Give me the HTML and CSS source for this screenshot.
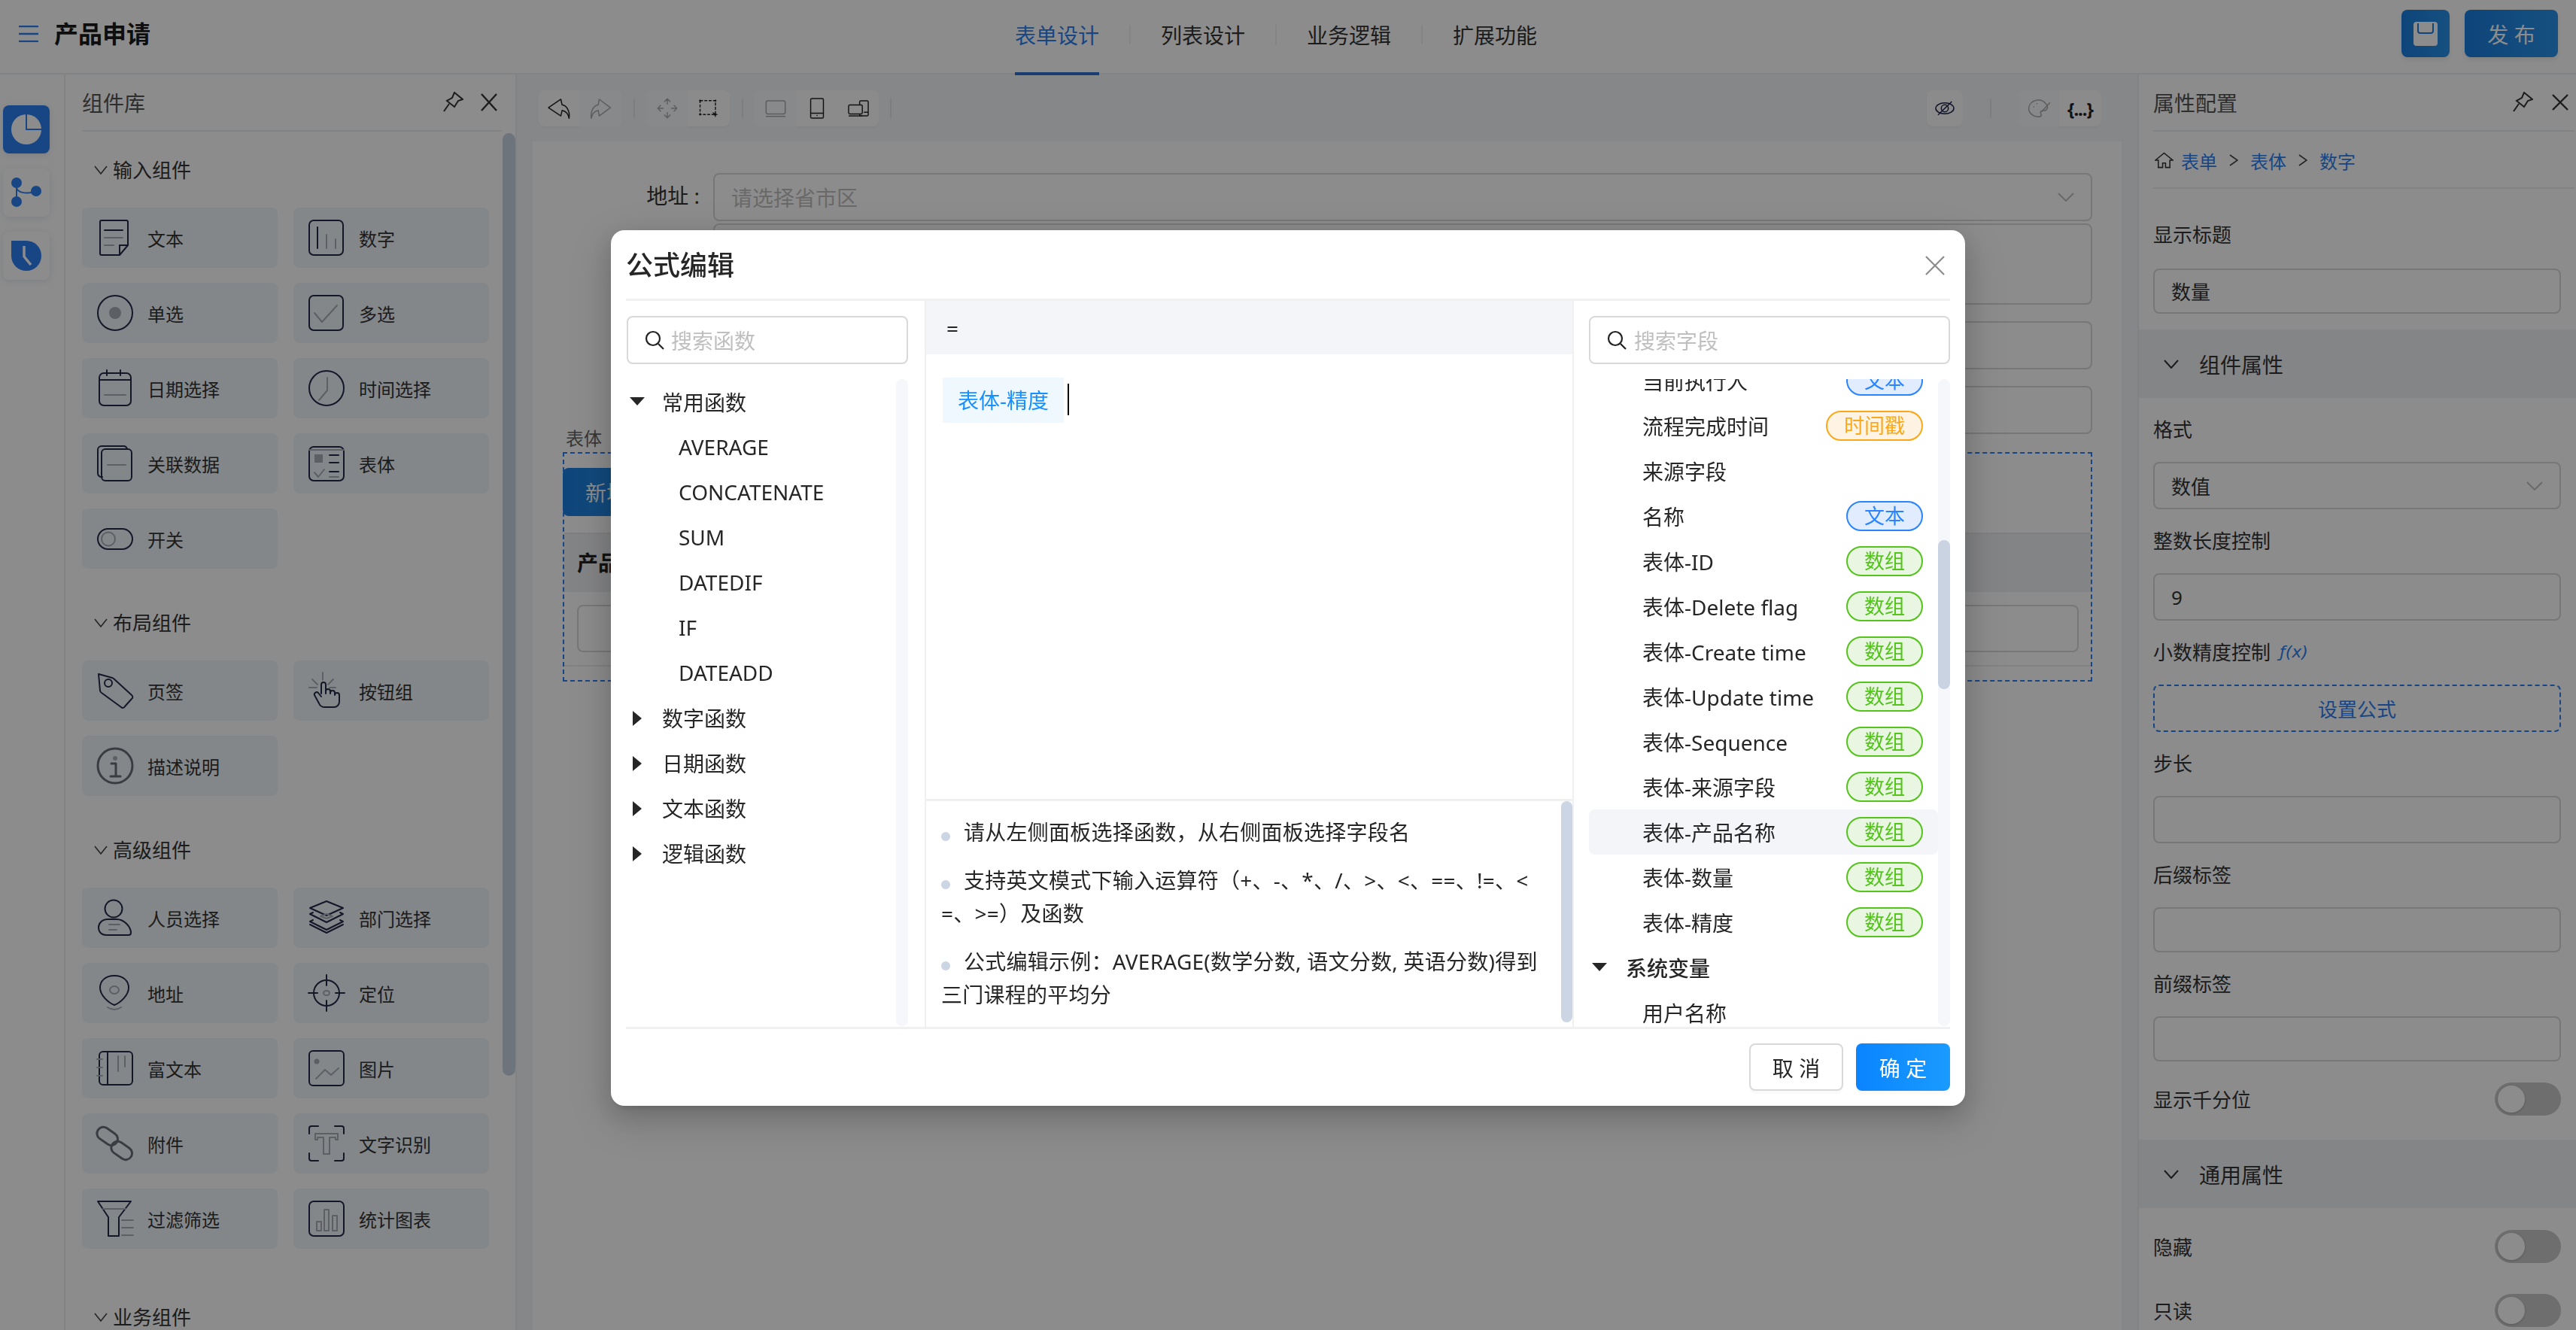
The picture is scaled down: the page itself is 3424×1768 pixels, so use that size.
FILE: index.html
```html
<!DOCTYPE html>
<html lang="zh">
<head>
<meta charset="utf-8">
<title>产品申请</title>
<link rel="stylesheet" href="styles.css">
</head>
<body>
<div class="app">
  <header class="topbar">
    <div class="brand">
      <svg class="menu-icon" viewBox="0 0 26 22"><path d="M0 1h26M0 11h26M0 21h26"/></svg>
      <span class="brand-name">产品申请</span>
    </div>
    <nav class="tabs">
      <a class="tab active">表单设计</a><i class="tab-sep"></i>
      <a class="tab">列表设计</a><i class="tab-sep"></i>
      <a class="tab">业务逻辑</a><i class="tab-sep"></i>
      <a class="tab">扩展功能</a>
    </nav>
    <div class="actions">
      <button class="primary-btn save-btn"><svg viewBox="0 0 32 32" class="save-icon"><rect width="32" height="32" rx="4" fill="#fff"/><path d="M6 2v10a3 3 0 0 0 3 3h14a3 3 0 0 0 3-3V2" fill="none" stroke="#1a7ee0" stroke-width="2"/></svg></button>
      <button class="primary-btn publish-btn">发 布</button>
    </div>
  </header>

  <div class="workspace">
    <aside class="rail">
      <div class="rail-btn on"><svg viewBox="0 0 40 40"><circle cx="20" cy="20" r="20" fill="#fff"/><path d="M20 0v20h20" fill="none" stroke="#2d7ff0" stroke-width="2"/></svg></div>
      <div class="rail-btn"><svg viewBox="0 0 40 40"><path d="M7 7v25M7 14c2 6 14 9 26 4" fill="none" stroke="#2d7ff0" stroke-width="2"/><circle cx="7" cy="7" r="7" fill="#2d7ff0"/><circle cx="7" cy="32" r="7" fill="#2d7ff0"/><circle cx="33" cy="18" r="7" fill="#2d7ff0"/></svg></div>
      <div class="rail-btn"><svg viewBox="0 0 40 40"><path d="M0 0h20a20 20 0 1 1-20 20z" fill="#2d7ff0"/><path d="M17 7v14l9 11" fill="none" stroke="#fff" stroke-width="3.5"/></svg></div>
    </aside>

    <aside class="library">
      <div class="panel-head">
        <span class="panel-title">组件库</span>
        <svg class="pin-icon" viewBox="0 0 28 28"><path d="M16 1l11 9-6 2-5 8-10-8 7-4zM9 16l-7 10" /></svg>
        <svg class="x-icon" viewBox="0 0 24 24"><path d="M2 1l20 22M22 1L2 23"/></svg>
      </div>
      <div class="lib-scroll">
        <h3 class="lib-group"><svg viewBox="0 0 18 12"><path d="M1 1l8 10 8-10"/></svg>输入组件</h3>
        <div class="lib-grid">
          <div class="lib-card"><svg class="ic" viewBox="0 0 48 48"><path d="M6 1h33a2 2 0 0 1 2 2v31L30 47H6a2 2 0 0 1-2-2V3a2 2 0 0 1 2-2z"/><path d="M41 34H30v13"/><path d="M10 14h24"/><path class="s" d="M10 24h24M10 34h12"/></svg><span>文本</span></div>
          <div class="lib-card"><svg class="ic" viewBox="0 0 48 48"><rect x="1" y="1" width="45" height="46" rx="6"/><path d="M12 10v28"/><path class="s" d="M24 20v18M36 26v12"/></svg><span>数字</span></div>
          <div class="lib-card"><svg class="ic" viewBox="0 0 48 48"><circle cx="24" cy="24" r="23"/><ellipse class="f" cx="24" cy="24" rx="8" ry="8"/></svg><span>单选</span></div>
          <div class="lib-card"><svg class="ic" viewBox="0 0 48 48"><rect x="1" y="1" width="45" height="46" rx="6"/><path class="s" d="M8 24l10 12L38 14"/></svg><span>多选</span></div>
          <div class="lib-card"><svg class="ic" viewBox="0 0 48 48"><rect x="3" y="4" width="42" height="43" rx="6"/><path d="M3 13h42"/><path d="M13 0v7M31 0v7"/><path class="s" d="M10 33h28"/></svg><span>日期选择</span></div>
          <div class="lib-card"><svg class="ic" viewBox="0 0 48 48"><circle cx="24" cy="24" r="23"/><path class="s" d="M25 10v17L14 40"/></svg><span>时间选择</span></div>
          <div class="lib-card"><svg class="ic" viewBox="0 0 48 48"><path d="M7 42a5 5 0 0 1-6-5V6a5 5 0 0 1 5-5h29a5 5 0 0 1 5 4"/><rect x="6" y="5" width="40" height="42" rx="5"/><path class="s" d="M14 26h24"/></svg><span>关联数据</span></div>
          <div class="lib-card"><svg class="ic" viewBox="0 0 48 48"><rect x="1" y="2" width="46" height="45" rx="6"/><path class="s" d="M1 6h46"/><rect class="f" x="8" y="12" width="11" height="11"/><path d="M28 13h12M28 23h12M28 35h12"/><path class="s" d="M8 36l5 6 8-10M28 42h12"/></svg><span>表体</span></div>
          <div class="lib-card"><svg class="ic" viewBox="0 0 48 48"><rect x="1" y="11" width="46" height="27" rx="13.5"/><circle class="s" cx="15" cy="24.5" r="9"/></svg><span>开关</span></div>
        </div>

        <h3 class="lib-group"><svg viewBox="0 0 18 12"><path d="M1 1l8 10 8-10"/></svg>布局组件</h3>
        <div class="lib-grid">
          <div class="lib-card"><svg class="ic" viewBox="0 0 48 48"><path d="M2 2l18 5a3 3 0 0 1 2 1l24 22a3 3 0 0 1 0 5L37 45a3 3 0 0 1-5 1L6 27a4 4 0 0 1-2-3z"/><circle cx="15" cy="14" r="5"/></svg><span>页签</span></div>
          <div class="lib-card"><svg class="ic" viewBox="0 0 48 48"><path class="s" d="M19 0v10M5 9l7 7M33 9l-7 7M1 20h10M28 20h8"/><path d="M17 28V16a3 3 0 0 1 6 0v12-3a3 3 0 0 1 6 0v3-1a3 3 0 0 1 6 0v3a3 3 0 0 1 6 0v9a7 7 0 0 1-7 7H21a8 8 0 0 1-7-5l-6-11a3 3 0 0 1 5-3l4 5"/></svg><span>按钮组</span></div>
          <div class="lib-card"><svg class="ic" viewBox="0 0 48 48"><circle class="t" cx="24" cy="24" r="23"/><circle class="f" cx="24" cy="14" r="3"/><path class="t" d="M19 21h6v17M18 38h13"/></svg><span>描述说明</span></div>
        </div>

        <h3 class="lib-group"><svg viewBox="0 0 18 12"><path d="M1 1l8 10 8-10"/></svg>高级组件</h3>
        <div class="lib-grid">
          <div class="lib-card"><svg class="ic" viewBox="0 0 48 48"><circle cx="22" cy="12" r="11.5"/><path d="M14 26h12c10 0 19 10 19 18 0 2-1 3-3 3H12C6 47 2 43 2 37c0-6 5-11 12-11z"/><path class="s" d="M16 33h14M16 40h10"/></svg><span>人员选择</span></div>
          <div class="lib-card"><svg class="ic" viewBox="0 0 48 48"><path d="M24 2L46 11 24 21 2 11zM6 17L2 19l22 11 22-11-4-2M6 27l-4 2 22 11 22-11-4-2"/><path d="M2 33l22 11 22-11"/><path class="s" d="M16 22l8 3 8-3-8-3z"/></svg><span>部门选择</span></div>
          <div class="lib-card"><svg class="ic" viewBox="0 0 48 48"><path d="M23 1C11 1 4 8 4 17c0 10 11 20 19 23 8-3 19-13 19-23C42 8 35 1 23 1z"/><ellipse class="s" cx="23" cy="20" rx="6" ry="5"/><path class="s" d="M14 43c6 4 12 4 18 0"/></svg><span>地址</span></div>
          <div class="lib-card"><svg class="ic" viewBox="0 0 48 48"><circle cx="24" cy="24" r="17"/><path d="M24 0v14M24 34v14M0 24h12M36 24h12"/><ellipse class="s" cx="24" cy="24" rx="4" ry="3"/></svg><span>定位</span></div>
          <div class="lib-card"><svg class="ic" viewBox="0 0 48 48"><rect x="3" y="2" width="44" height="44" rx="5"/><path d="M14 2v44"/><path class="s" d="M0 12h7M0 34h7M0 23h7M28 8v20M37 8v14"/></svg><span>富文本</span></div>
          <div class="lib-card"><svg class="ic" viewBox="0 0 48 48"><rect x="1" y="1" width="46" height="46" rx="5"/><circle class="f" cx="11" cy="15" r="3.5"/><path class="s" d="M10 38l12-12 8 7 10-9"/></svg><span>图片</span></div>
          <div class="lib-card"><svg class="ic" viewBox="0 0 48 48"><rect class="t" x="-1" y="6" width="30" height="17" rx="8.5" transform="rotate(35 14 14)"/><rect class="t" x="18" y="25" width="30" height="17" rx="8.5" transform="rotate(35 33 33)"/></svg><span>附件</span></div>
          <div class="lib-card"><svg class="ic" viewBox="0 0 48 48"><path d="M1 11V4a3 3 0 0 1 3-3h9M35 1h9a3 3 0 0 1 3 3v7M47 37v7a3 3 0 0 1-3 3h-9M13 47H4a3 3 0 0 1-3-3v-7"/><path class="s" d="M9 11h30v8h-3v-3H28v22h-8V16h-8v3H9z"/></svg><span>文字识别</span></div>
          <div class="lib-card"><svg class="ic" viewBox="0 0 48 48"><path d="M1 1h44L29 22v25H15V22z"/><path class="s" d="M8 11h30M33 26h15M33 36h15M33 46h15"/></svg><span>过滤筛选</span></div>
          <div class="lib-card"><svg class="ic" viewBox="0 0 48 48"><rect x="1" y="1" width="46" height="46" rx="6"/><path class="s" d="M11 28h6v12h-6zM21 12h6v28h-6zM32 20h6v20h-6z"/></svg><span>统计图表</span></div>
        </div>

        <h3 class="lib-group last"><svg viewBox="0 0 18 12"><path d="M1 1l8 10 8-10"/></svg>业务组件</h3>
      </div>
      <div class="lib-thumb"></div>
    </aside>

    <section class="canvas">
      <div class="toolstrip">
        <div class="toolgroup">
          <span class="tool lit w54 lt"><svg class="ti w32" viewBox="85 57 95 88"><path d="M140 63L90 97l50 33 5-22c15 3 25 15 28 32 5-25-8-52-28-55z"/></svg></span>
          <span class="tool w57 rt"><svg class="ti w32 dim" viewBox="248 57 95 88"><path d="M288 63l45 34-45 33-4-22c-15 3-25 15-28 32-5-25 8-52 28-55z"/></svg></span>
          <i class="tsep"></i>
          <span class="tool w54 lt"><svg class="ti w28 dim" viewBox="521 58 88 88"><path d="M565 62v24M565 118v24M525 102h24M581 102h24M552 75l13-13 13 13M552 129l13 13 13-13M538 89l-13 13 13 13M592 89l13 13-13 13"/></svg></span>
          <span class="tool lit w56 rt"><svg class="ti w28" viewBox="685 62 88 80"><path d="M693 70h64v58h-64z" stroke-dasharray="12 6"/><path d="M689 70h8M753 70h8M693 66v8M757 66v8M693 124v8M689 128h8" /><path class="solid" d="M744 118l24 10-9 3-1 9z"/></svg></span>
          <i class="tsep s3"></i>
          <span class="tool w55 lt"><svg class="ti w28 dim" viewBox="952 62 86 74"><rect x="956" y="68" width="78" height="54" rx="7"/><path d="M955 132h80"/></svg></span>
          <span class="tool lit w55"><svg class="ti w18 h28" viewBox="1129 59 58 86"><rect x="1132" y="62" width="52" height="80" rx="5"/><path d="M1132 122h52M1156 131h4" /></svg></span>
          <span class="tool lit w55 rt"><svg class="ti w28" viewBox="1277 65 86 68"><rect x="1325" y="68" width="35" height="62" rx="5"/><path d="M1342 115h18"/><rect class="plate" x="1280" y="85" width="56" height="37" rx="5"/><path d="M1280 130h56"/></svg></span>
          <i class="tsep"></i>
        </div>
        <div class="toolgroup">
          <span class="tool lit w48 lt rt"><svg class="ti w26 nav" viewBox="93 73 78 58"><ellipse cx="132" cy="102" rx="36" ry="22"/><circle cx="132" cy="102" r="14"/><path d="M105 128l55-53"/></svg></span>
          <i class="tsep wide"></i>
          <span class="tool w53 lt"><svg class="ti w30 dim" viewBox="468 65 90 72"><path d="M510 68c-25 0-40 17-40 34 0 20 20 33 40 33 10 0 12-7 8-13-4-7 2-12 10-12h7c10-5 13-15 5-25-6-8-18-17-30-17z"/><path d="M555 78l-35 37M488 95h4M500 82h4"/></svg></span>
          <span class="tool lit w56 rt code">{...}</span>
        </div>
      </div>
      <div class="form-sheet">
        <div class="form-row"><label class="form-label">地址 :</label><div class="form-control"><span class="placeholder">请选择省市区</span><svg class="caret-down" viewBox="0 0 22 12"><path d="M1 1l10 10L21 1"/></svg></div></div>
        <div class="form-row tight"><i class="form-label"></i><div class="form-control area"></div></div>
        <div class="form-row gap"><i class="form-label"></i><div class="form-control"></div></div>
        <div class="form-row gap"><i class="form-label"></i><div class="form-control"></div></div>
        <div class="table-label">表体</div>
        <div class="table-box">
          <button class="add-btn">新增</button>
          <div class="table-head">产品名称</div>
          <div class="table-row"><div class="table-input"></div></div>
        </div>
      </div>
    </section>

    <aside class="props">
      <div class="panel-head props-head">
        <span class="panel-title">属性配置</span>
        <svg class="pin-icon flat" viewBox="0 0 28 28"><path d="M16 1l11 9-6 2-5 8-10-8 7-4zM9 16l-7 10"/></svg>
        <svg class="x-icon" viewBox="0 0 24 24"><path d="M2 2l20 20M22 2L2 22"/></svg>
      </div>
      <div class="crumbs">
        <svg class="home-icon" viewBox="0 0 26 22"><path d="M1 11L13 1l12 10h-4v10h-6v-6h-4v6H5V11z"/></svg>
        <a>表单</a><svg class="crumb-sep" viewBox="0 0 12 16"><path d="M1 1l10 7L1 15"/></svg>
        <a>表体</a><svg class="crumb-sep" viewBox="0 0 12 16"><path d="M1 1l10 7L1 15"/></svg>
        <a>数字</a>
      </div>
      <div class="prop-field first"><label>显示标题</label><div class="prop-input h60">数量</div></div>
      <div class="prop-section"><svg viewBox="0 0 20 12"><path d="M1 1l9 10 9-10"/></svg>组件属性</div>
      <div class="prop-field"><label>格式</label><div class="prop-input">数值<svg class="caret-down" viewBox="0 0 22 12"><path d="M1 1l10 10L21 1"/></svg></div></div>
      <div class="prop-field"><label>整数长度控制</label><div class="prop-input">9</div></div>
      <div class="prop-field"><label>小数精度控制<em class="fx">ƒ(x)</em></label><div class="prop-input dashed">设置公式</div></div>
      <div class="prop-field"><label>步长</label><div class="prop-input"></div></div>
      <div class="prop-field"><label>后缀标签</label><div class="prop-input h60"></div></div>
      <div class="prop-field"><label>前缀标签</label><div class="prop-input h60"></div></div>
      <div class="prop-toggle t1"><span>显示千分位</span><i class="switch"></i></div>
      <div class="prop-section s2"><svg viewBox="0 0 20 12"><path d="M1 1l9 10 9-10"/></svg>通用属性</div>
      <div class="prop-toggle t2"><span>隐藏</span><i class="switch"></i></div>
      <div class="prop-toggle t3"><span>只读</span><i class="switch"></i></div>
    </aside>
  </div>
</div>

<div class="mask"></div>

<div class="modal">
  <div class="modal-head">
    <span class="modal-title">公式编辑</span>
    <svg class="modal-close" viewBox="0 0 26 26"><path d="M1 1l24 24M25 1L1 25"/></svg>
  </div>
  <div class="modal-body">
    <div class="col-fn">
      <div class="search"><svg viewBox="0 0 26 26"><circle cx="11" cy="11" r="9"/><path d="M18 18l7 7"/></svg><span>搜索函数</span></div>
      <div class="tree-wrap">
        <div class="tree-node"><i class="tri down"></i>常用函数</div>
        <div class="tree-leaf">AVERAGE</div>
        <div class="tree-leaf">CONCATENATE</div>
        <div class="tree-leaf">SUM</div>
        <div class="tree-leaf">DATEDIF</div>
        <div class="tree-leaf">IF</div>
        <div class="tree-leaf">DATEADD</div>
        <div class="tree-node"><i class="tri right"></i>数字函数</div>
        <div class="tree-node"><i class="tri right"></i>日期函数</div>
        <div class="tree-node"><i class="tri right"></i>文本函数</div>
        <div class="tree-node"><i class="tri right"></i>逻辑函数</div>
        <i class="track"></i>
      </div>
    </div>
    <div class="col-editor">
      <div class="editor-head">=</div>
      <div class="editor-area"><span class="token">表体-精度</span><i class="text-caret"></i></div>
      <div class="tips">
        <p><i class="dot"></i>请从左侧面板选择函数，从右侧面板选择字段名</p>
        <p><i class="dot"></i>支持英文模式下输入运算符（+、-、*、/、&gt;、&lt;、==、!=、&lt;<br>=、&gt;=）及函数</p>
        <p><i class="dot"></i>公式编辑示例：AVERAGE(数学分数, 语文分数, 英语分数)得到<br>三门课程的平均分</p>
        <i class="tips-thumb"></i>
      </div>
    </div>
    <div class="col-fields">
      <div class="search"><svg viewBox="0 0 26 26"><circle cx="11" cy="11" r="9"/><path d="M18 18l7 7"/></svg><span>搜索字段</span></div>
      <div class="field-wrap">
        <div class="field-list">
          <div class="field"><span>当前执行人</span><b class="tag blue">文本</b></div>
          <div class="field"><span>流程完成时间</span><b class="tag orange">时间戳</b></div>
          <div class="field"><span>来源字段</span></div>
          <div class="field"><span>名称</span><b class="tag blue">文本</b></div>
          <div class="field"><span>表体-ID</span><b class="tag green">数组</b></div>
          <div class="field"><span>表体-Delete flag</span><b class="tag green">数组</b></div>
          <div class="field"><span>表体-Create time</span><b class="tag green">数组</b></div>
          <div class="field"><span>表体-Update time</span><b class="tag green">数组</b></div>
          <div class="field"><span>表体-Sequence</span><b class="tag green">数组</b></div>
          <div class="field"><span>表体-来源字段</span><b class="tag green">数组</b></div>
          <div class="field hover"><span>表体-产品名称</span><b class="tag green">数组</b></div>
          <div class="field"><span>表体-数量</span><b class="tag green">数组</b></div>
          <div class="field"><span>表体-精度</span><b class="tag green">数组</b></div>
          <div class="field-group"><i class="tri down"></i>系统变量</div>
          <div class="field"><span>用户名称</span></div>
        </div>
        <i class="track"></i><i class="field-thumb"></i>
      </div>
    </div>
  </div>
  <div class="modal-foot">
    <button class="btn-cancel">取 消</button>
    <button class="btn-ok">确 定</button>
  </div>
</div>
</body>
</html>
```

FILE: styles.css
```css
* { box-sizing: border-box; }
html, body { margin: 0; padding: 0; width: 3424px; height: 1768px; overflow: hidden; }
body { font-family: "Noto Sans", "Noto Sans CJK SC", sans-serif; font-size: 28px; color: #262626; background: #fff; }
button { font-family: inherit; }
h3, p { margin: 0; }
em, i, b { font-style: normal; font-weight: 400; }

.app { width: 3424px; height: 1768px; display: flex; flex-direction: column; }

/* top bar */
.topbar { height: 99px; flex: none; position: relative; display: flex; align-items: center; justify-content: space-between; border-bottom: 2px solid #eceef1; padding: 0 24px 8px 25px; background: #fff; }
.brand { display: flex; align-items: center; gap: 21px; }
.menu-icon { width: 26px; height: 22px; fill: none; stroke: #2d7ff0; stroke-width: 2.5; }
.brand-name { font-size: 32px; font-weight: 700; line-height: 44px; color: #1a1a1a; }
.tabs { position: absolute; left: 1349px; top: 0; height: 100px; display: flex; align-items: flex-start; }
.tab { display: block; height: 100px; line-height: 94px; font-size: 28px; color: #333; border-bottom: 4px solid transparent; }
.tab.active { color: #2d7ff0; border-bottom-color: #2d6fd0; }
.tab-sep { width: 2px; height: 26px; background: #f0f0f0; margin: 33px 40px 0; }
.actions { display: flex; gap: 20px; align-items: center; }
.primary-btn { height: 63px; border: 0; border-radius: 8px; color: #fff; background: linear-gradient(90deg, #1a7ee0, #2892e8); font-size: 28px; padding: 0; box-shadow: 0 4px 6px rgba(0,0,0,.08); display: flex; align-items: center; justify-content: center; }
.save-btn { width: 64px; }
.save-icon { width: 32px; height: 32px; }
.publish-btn { width: 124px; }

.workspace { flex: 1; display: flex; min-height: 0; }

/* icon rail */
.rail { width: 87px; flex: none; padding: 41px 0 0 4px; display: flex; flex-direction: column; gap: 20px; border-right: 2px solid #ebedf0; background: #fff; }
.rail-btn { width: 62px; height: 64px; border-radius: 8px; background: #fff; box-shadow: 0 2px 8px rgba(30,60,120,.12); display: flex; align-items: center; justify-content: center; }
.rail-btn.on { background: #2d7ff0; }
.rail-btn svg { width: 40px; height: 40px; }

/* library */
.library { width: 600px; flex: none; position: relative; padding-left: 22px; overflow: hidden; border-right: 2px solid #ebedf0; background: #fff; }
.panel-head { height: 76px; display: flex; align-items: center; border-bottom: 2px solid #eceef1; width: 558px; }
.panel-title { font-size: 28px; color: #555; flex: 1; }
.pin-icon { width: 28px; height: 28px; fill: none; stroke: #333; stroke-width: 2; margin-right: 22px; }
.x-icon { width: 24px; height: 24px; fill: none; stroke: #333; stroke-width: 2.4; margin-right: 5px; }
.lib-group { height: 40px; margin: 52px 0 30px; font-size: 26px; font-weight: 400; line-height: 40px; display: flex; align-items: center; padding-left: 16px; color: #333; }
.lib-scroll > .lib-group:first-child { margin-top: 31px; }
.lib-group svg { width: 18px; height: 12px; fill: none; stroke: #444; stroke-width: 1.6; margin-right: 7px; }
.lib-group.last { margin-top: 71px; }
.lib-grid { display: grid; grid-template-columns: 260px 260px; column-gap: 21px; row-gap: 20px; }
.lib-card { height: 80px; border-radius: 8px; background: #eff6fb; display: flex; align-items: center; padding-left: 20px; font-size: 24px; color: #333; }
.lib-card span { margin-left: 19px; }
.ic { width: 48px; height: 48px; flex: none; fill: none; stroke: #262a4a; stroke-width: 2; stroke-linejoin: round; stroke-linecap: round; overflow: visible; }
.ic .s { stroke: #a9adb8; }
.ic .f { fill: #a9adb8; stroke: none; }
.ic .t { stroke: #6a6e78; stroke-width: 3; }
.lib-thumb { position: absolute; right: 0; top: 78px; width: 17px; height: 1253px; border-radius: 9px; background: #c9d3e2; }

/* canvas */
.canvas { flex: 1; min-width: 0; background: #f4f6f9; display: flex; flex-direction: column; padding: 0 21px; }
.toolstrip { height: 89px; flex: none; display: flex; justify-content: space-between; align-items: flex-start; padding: 21px 0 0 8px; }
.toolgroup { display: flex; align-items: center; height: 48px; }
.tool { height: 48px; display: flex; align-items: center; justify-content: center; background: #f8f9fb; }
.tool.lit { background: #fdfdfe; box-shadow: 0 2px 2px rgba(0,0,0,.03); }
.tool.lt { border-radius: 8px 0 0 8px; }
.tool.rt { border-radius: 0 8px 8px 0; }
.tool.lt.rt { border-radius: 8px; }
.w48 { width: 48px; } .w53 { width: 53px; } .w54 { width: 54px; } .w55 { width: 55px; } .w56 { width: 56px; } .w57 { width: 57px; }
.ti { fill: none; stroke: #222; stroke-width: 4.5; stroke-linejoin: round; height: 28px; }
.ti.w32 { width: 32px; height: 29px; }
.ti.w30 { width: 30px; height: 24px; }
.ti.w28 { width: 28px; }
.ti.w26 { width: 26px; height: 20px; }
.ti.w18 { width: 20px; height: 28px; }
.ti.dim { stroke: #aaa; }
.ti.nav { stroke: #1d2148; }
.ti .solid { fill: #222; stroke: none; }
.ti .plate { fill: #fdfdfe; }
.tsep { width: 2px; height: 26px; background: #e3e5e8; margin: 0 16px 0 15px; }
.tsep.s3 { margin: 0 15px 0 16px; }
.tsep.wide { margin: 0 37px 0 36px; }
.code { font-size: 24px; font-weight: 700; color: #222; letter-spacing: -1px; }
.toolgroup:last-child { padding-right: 27px; }
.form-sheet { flex: 1; background: #fff; padding: 42px 39px 0 40px; min-height: 0; }
.form-row { display: flex; }
.form-row.tight { margin-top: 3px; }
.form-row.gap { margin-top: 22px; }
.form-label { width: 200px; flex: none; text-align: right; padding-right: 18px; line-height: 60px; font-size: 28px; color: #333; }
.form-control { flex: 1; height: 64px; border: 2px solid #d9d9d9; border-radius: 8px; display: flex; align-items: center; justify-content: space-between; padding: 0 22px; }
.form-control.area { height: 108px; }
.placeholder { color: #bfbfbf; font-size: 28px; }
.caret-down { width: 22px; height: 12px; fill: none; stroke: #bfbfbf; stroke-width: 2; }
.table-label { font-size: 24px; color: #666; margin: -13px 0 0 4px; line-height: 37px; height: 37px; }
.table-box { border: 2px dashed #2d7ff0; height: 305px; margin-top: 0; padding-top: 19px; }
.add-btn { display: block; width: 130px; height: 64px; margin-left: -2px; border: 0; border-radius: 8px; background: linear-gradient(90deg,#1a7ee0,#2892e8); color: #fff; font-size: 28px; text-align: left; padding-left: 30px; }
.table-head { height: 79px; margin-top: 22px; background: #eff0f4; border-top: 2px solid #e8e8e8; line-height: 77px; padding-left: 17px; font-size: 28px; font-weight: 700; color: #222; }
.table-row { border-bottom: 2px solid #ececec; padding: 17px 16px 17px 17px; }
.table-input { height: 63px; border: 2px solid #d9d9d9; border-radius: 8px; }

/* properties */
.props { width: 583px; flex: none; background: #fff; padding: 0 0 0 19px; border-left: 2px solid #ebedf0; overflow: hidden; }
.props-head { width: 560px; border-bottom-color: #eceef1; }
.pin-icon.flat { margin-right: 24px; }
.props .x-icon { margin-right: 7px; }
.crumbs { height: 76px; width: 560px; display: flex; align-items: center; border-bottom: 2px solid #eceef1; font-size: 24px; color: #2d7ff0; padding: 2px 0 0 2px; }
.home-icon { width: 25px; height: 22px; fill: none; stroke: #333; stroke-width: 1.6; margin-right: 10px; }
.crumb-sep { width: 12px; height: 16px; fill: none; stroke: #444; stroke-width: 1.6; margin: 0 16px; }
.prop-field { width: 542px; margin-top: 24px; }
.prop-field.first { margin-top: 43px; }
.prop-field label { display: flex; align-items: center; height: 36px; line-height: 36px; font-size: 26px; color: #333; margin-bottom: 25px; }
.prop-field.first label { margin-bottom: 27px; }
.prop-input { height: 63px; border: 2px solid #d9d9d9; border-radius: 8px; padding: 0 22px; display: flex; align-items: center; justify-content: space-between; font-size: 26px; color: #333; }
.prop-input.h60 { height: 60px; }
.prop-input.dashed { border: 2px dashed #2d7ff0; justify-content: center; color: #2d7ff0; font-size: 26px; }
.fx { font-size: 22px; color: #2d7ff0; margin-left: 12px; font-style: italic; font-family: "DejaVu Sans", sans-serif; }
.prop-section { height: 91px; margin: 21px 0 0 -19px; background: #f1f2f5; display: flex; align-items: center; padding-left: 33px; font-size: 28px; color: #333; }
.prop-section svg { width: 20px; height: 12px; fill: none; stroke: #333; stroke-width: 2; margin-right: 27px; }
.prop-section.s2 { margin-top: 32px; }
.prop-section + .prop-field { margin-top: 24px; }
.prop-toggle { width: 542px; height: 44px; display: flex; align-items: center; justify-content: space-between; font-size: 26px; color: #333; }
.t1 { margin-top: 28px; } .t2 { margin-top: 29px; } .t3 { margin-top: 41px; }
.switch { display: block; width: 88px; height: 44px; border-radius: 22px; background: #c8c8c8; position: relative; }
.switch::after { content: ""; position: absolute; left: 4px; top: 4px; width: 36px; height: 36px; border-radius: 50%; background: #fff; box-shadow: 0 1px 3px rgba(0,0,0,.2); }

/* mask and modal */
.mask { position: fixed; inset: 0; background: rgba(0,0,0,.45); }
.modal { position: fixed; left: 812px; top: 306px; width: 1800px; height: 1164px; background: #fff; border-radius: 18px; padding: 0 20px; display: flex; flex-direction: column; box-shadow: 0 6px 12px -8px rgba(0,0,0,.24), 0 12px 32px 0 rgba(0,0,0,.16), 0 18px 56px 16px rgba(0,0,0,.1); }
.modal-head { height: 94px; flex: none; display: flex; align-items: center; justify-content: space-between; border-bottom: 3px solid #f0f0f0; padding: 2px 7px 0 0; }
.modal-title { font-size: 36px; font-weight: 500; color: #262626; line-height: 50px; }
.modal-close { width: 26px; height: 26px; fill: none; stroke: #8c8c8c; stroke-width: 2.2; }
.modal-body { height: 965px; flex: none; display: flex; }
.col-fn { width: 397px; flex: none; padding-top: 20px; }
.search { height: 64px; border: 2px solid #d9d9d9; border-radius: 8px; display: flex; align-items: center; padding-left: 22px; color: #bfbfbf; font-size: 28px; }
.search svg { width: 26px; height: 26px; fill: none; stroke: #222; stroke-width: 2.2; margin-right: 10px; flex: none; }
.col-fn .search { width: 374px; margin-left: 1px; }
.col-fn .search svg { margin-right: 9px; }
.tree-wrap { position: relative; height: 860px; margin-top: 20px; overflow: hidden; }
.tree-node { height: 60px; display: flex; align-items: center; padding-left: 48px; position: relative; font-size: 28px; color: #262626; }
.tree-leaf { height: 60px; line-height: 60px; padding-left: 70px; font-size: 28px; color: #262626; }
.tri { position: absolute; width: 0; height: 0; border-style: solid; }
.tri.down { left: 5px; top: 24px; border-width: 11px 10px 0; border-color: #262626 transparent transparent; }
.tri.right { left: 9px; top: 21px; border-width: 10px 0 10px 12px; border-color: transparent transparent transparent #262626; }
.track { position: absolute; top: 0; bottom: 0; right: 0; width: 16px; border-radius: 8px; background: #f5f7fa; }
.col-fn .track { right: 22px; }
.col-editor { width: 863px; flex: none; border-left: 2px solid #f0f0f0; border-right: 2px solid #f0f0f0; display: flex; flex-direction: column; }
.editor-head { height: 71px; flex: none; background: #f3f5f9; padding-left: 27px; line-height: 72px; font-size: 28px; }
.editor-area { height: 594px; flex: none; padding: 31px 0 0 22px; display: flex; align-items: flex-start; border-bottom: 3px solid #f0f0f0; }
.token { height: 60px; line-height: 60px; padding: 0 20px; background: #f0f8ff; color: #1890ff; font-size: 28px; }
.text-caret { display: block; width: 2px; height: 42px; margin: 8px 0 0 5px; background: #000; }
.tips { position: relative; flex: 1; padding: 19px 0 0 20px; font-size: 28px; line-height: 44px; letter-spacing: .25px; color: #262626; white-space: nowrap; overflow: hidden; }
.tips p + p { margin-top: 20px; }
.dot { display: inline-block; width: 12px; height: 12px; border-radius: 50%; background: #ccd5e3; margin-right: 18px; vertical-align: -1px; }
.tips-thumb { position: absolute; right: 0; top: 0; width: 15px; height: 294px; border-radius: 8px; background: #ccd5e3; }
.col-fields { flex: 1; padding: 20px 0 0 20px; }
.field-wrap { position: relative; height: 860px; margin-top: 20px; overflow: hidden; }
.field-list { margin-top: -28px; padding-right: 16px; }
.field { height: 60px; display: flex; align-items: center; justify-content: space-between; padding: 0 20px 0 71px; border-radius: 8px; font-size: 28px; color: #262626; }
.field.hover { background: #f3f5f9; }
.field-group { height: 60px; display: flex; align-items: center; padding-left: 49px; position: relative; font-size: 28px; font-weight: 500; color: #262626; }
.field-group .tri.down { left: 4px; }
.tag { height: 40px; min-width: 100px; padding: 0 22px; border: 2px solid; border-radius: 20px; line-height: 36px; text-align: center; font-size: 27px; }
.tag.blue { color: #2b84ff; border-color: #2b84ff; background: #e1edff; }
.tag.green { color: #52c41a; border-color: #52c41a; background: #e9f6e2; }
.tag.orange { color: #faa81a; border-color: #faa81a; background: #fff3e3; }
.field-thumb { position: absolute; right: 0; top: 214px; width: 16px; height: 198px; border-radius: 8px; background: #c9d3e2; }
.modal-foot { height: 105px; flex: none; border-top: 3px solid #f0f0f0; display: flex; justify-content: flex-end; gap: 17px; padding-top: 19px; }
.modal-foot button { width: 125px; height: 63px; border-radius: 8px; font-size: 28px; padding: 0; box-shadow: 0 4px 0 rgba(0,0,0,.02); }
.btn-cancel { background: #fff; border: 2px solid #d9d9d9; color: #262626; }
.btn-ok { background: linear-gradient(90deg, #0a84ff, #1a9bff); border: 0; color: #fff; }
```
